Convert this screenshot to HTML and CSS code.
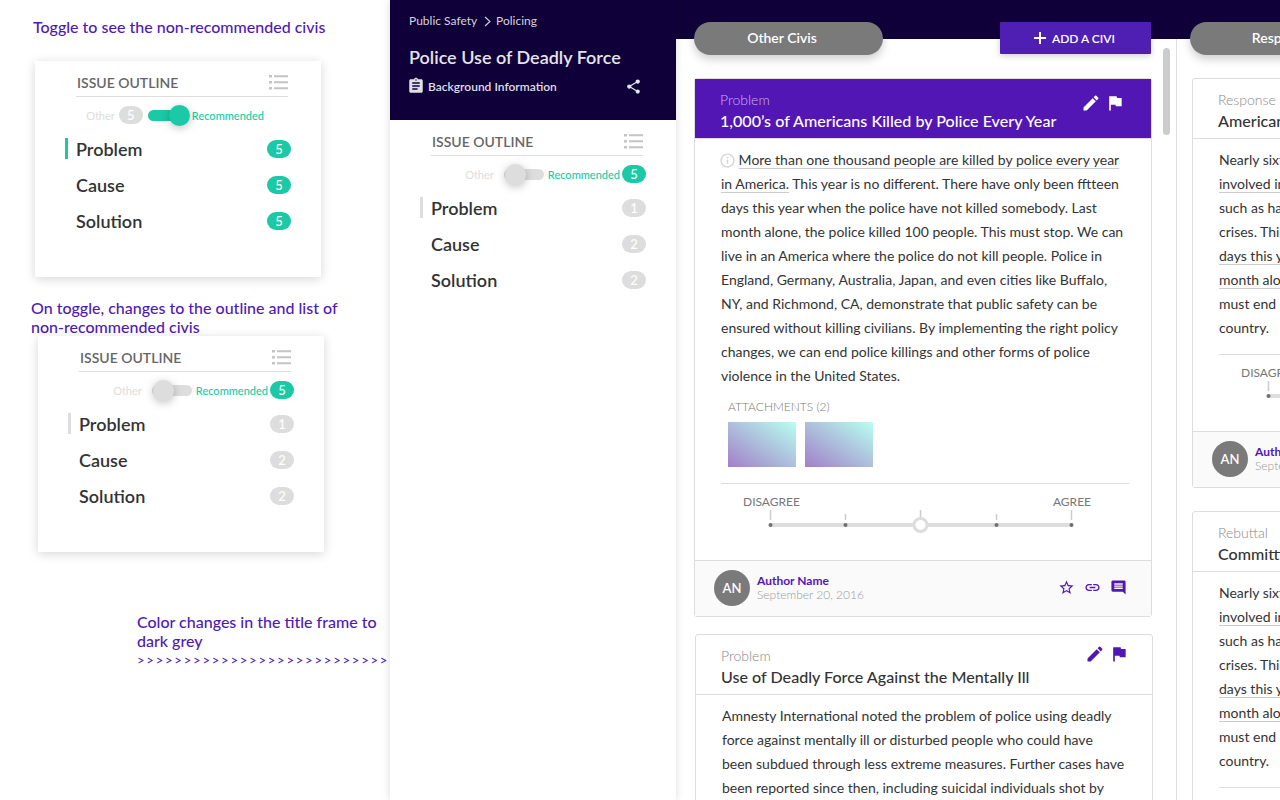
FILE: index.html
```html
<!DOCTYPE html>
<html lang="en">
<head>
    <meta charset="UTF-8">
    <meta name="viewport" content="width=device-width, initial-scale=1.0">
    <title>Police Use of Deadly Force</title>
    <link rel="stylesheet" href="styles.css">
</head>
<body>

    <svg class="sprite" xmlns="http://www.w3.org/2000/svg">
        <symbol id="i-edit" viewBox="0 0 24 24"><path d="M3 17.25V21h3.75L17.81 9.94l-3.75-3.75L3 17.25zM20.71 7.04c.39-.39.39-1.02 0-1.41l-2.34-2.34c-.39-.39-1.02-.39-1.41 0l-1.83 1.83 3.75 3.75 1.83-1.83z"/></symbol>
        <symbol id="i-flag" viewBox="0 0 24 24"><path d="M14.4 6L14 4H5v17h2v-7h5.6l.4 2h7V6z"/></symbol>
        <symbol id="i-star" viewBox="0 0 24 24"><path d="M22 9.24l-7.19-.62L12 2 9.19 8.63 2 9.24l5.46 4.73L5.82 21 12 17.27 18.18 21l-1.63-7.03L22 9.24zM12 15.4l-3.76 2.27 1-4.28-3.32-2.88 4.38-.38L12 6.1l1.71 4.04 4.38.38-3.32 2.88 1 4.28L12 15.4z"/></symbol>
        <symbol id="i-link" viewBox="0 0 24 24"><path d="M3.9 12c0-1.71 1.39-3.1 3.1-3.1h4V7H7c-2.76 0-5 2.24-5 5s2.24 5 5 5h4v-1.9H7c-1.71 0-3.1-1.39-3.1-3.1zM8 13h8v-2H8v2zm9-6h-4v1.9h4c1.71 0 3.1 1.39 3.1 3.1s-1.39 3.1-3.1 3.1h-4V17h4c2.76 0 5-2.24 5-5s-2.24-5-5-5z"/></symbol>
        <symbol id="i-comment" viewBox="0 0 24 24"><path d="M21.99 4c0-1.1-.89-2-1.99-2H4c-1.1 0-2 .9-2 2v12c0 1.1.9 2 2 2h14l4 4-.01-18zM18 14H6v-2h12v2zm0-3H6V9h12v2zm0-3H6V6h12v2z"/></symbol>
        <symbol id="i-clipboard" viewBox="0 0 24 24"><path d="M19 3h-4.18C14.4 1.84 13.3 1 12 1c-1.3 0-2.4.84-2.82 2H5c-1.1 0-2 .9-2 2v14c0 1.1.9 2 2 2h14c1.1 0 2-.9 2-2V5c0-1.1-.9-2-2-2zm-7 0c.55 0 1 .45 1 1s-.45 1-1 1-1-.45-1-1 .45-1 1-1zm2 14H7v-2h7v2zm3-4H7v-2h10v2zm0-4H7V7h10v2z"/></symbol>
        <symbol id="i-share" viewBox="0 0 24 24"><path d="M18 16.08c-.76 0-1.44.3-1.96.77L8.91 12.7c.05-.23.09-.46.09-.7s-.04-.47-.09-.7l7.05-4.11c.54.5 1.25.81 2.04.81 1.66 0 3-1.34 3-3s-1.34-3-3-3-3 1.34-3 3c0 .24.04.47.09.7L8.04 9.81C7.5 9.31 6.79 9 6 9c-1.66 0-3 1.34-3 3s1.34 3 3 3c.79 0 1.5-.31 2.04-.81l7.12 4.16c-.05.21-.08.43-.08.65 0 1.61 1.31 2.92 2.92 2.92 1.61 0 2.92-1.31 2.92-2.92s-1.31-2.92-2.92-2.92z"/></symbol>
        <symbol id="i-info" viewBox="0 0 24 24"><path d="M11 7h2v2h-2zm0 4h2v6h-2zm1-9C6.48 2 2 6.48 2 12s4.48 10 10 10 10-4.48 10-10S17.52 2 12 2zm0 18c-4.41 0-8-3.59-8-8s3.59-8 8-8 8 3.59 8 8-3.59 8-8 8z"/></symbol>
        <symbol id="i-list" viewBox="0 0 19 15"><path d="M0 0h3v2.4H0zM5 .2h14v2H5zM0 6h3v2.4H0zM5 6.2h14v2H5zM0 12h3v2.4H0zM5 12.2h14v2H5z"/></symbol>
        <symbol id="i-plus" viewBox="0 0 12 12"><path d="M5 0h2v5h5v2H7v5H5V7H0V5h5z"/></symbol>
        <symbol id="i-chevron" viewBox="0 0 7 11"><path d="M1 1l5 4.5L1 10" fill="none" stroke="currentColor" stroke-width="1.1"/></symbol>
    </svg>

    <div class="board">

        <section class="notes">
            <p class="note note-first">Toggle to see the non-recommended civis</p>

            <div class="outline outline-first">
                <div class="outline-head">
                    <span>ISSUE OUTLINE</span>
                    <svg class="icon-list"><use href="#i-list"/></svg>
                </div>
                <div class="toggle-row toggle-row-on">
                    <span class="toggle-other">Other</span>
                    <span class="badge badge-grey">5</span>
                    <span class="toggle toggle-on"></span>
                    <span class="toggle-rec">Recommended</span>
                </div>
                <ul class="outline-list">
                    <li class="current-green">Problem <span class="badge">5</span></li>
                    <li>Cause <span class="badge">5</span></li>
                    <li>Solution <span class="badge">5</span></li>
                </ul>
            </div>

            <p class="note note-second">On toggle, changes to the outline and list of non-recommended civis</p>

            <div class="outline outline-second">
                <div class="outline-head">
                    <span>ISSUE OUTLINE</span>
                    <svg class="icon-list"><use href="#i-list"/></svg>
                </div>
                <div class="toggle-row">
                    <span class="toggle-other">Other</span>
                    <span class="toggle"></span>
                    <span class="toggle-rec">Recommended</span>
                    <span class="badge">5</span>
                </div>
                <ul class="outline-list">
                    <li class="current-grey">Problem <span class="badge badge-grey">1</span></li>
                    <li>Cause <span class="badge badge-grey">2</span></li>
                    <li>Solution <span class="badge badge-grey">2</span></li>
                </ul>
            </div>

            <p class="note note-third">Color changes in the title frame to dark grey</p>
            <p class="note-arrows">&gt;&gt;&gt;&gt;&gt;&gt;&gt;&gt;&gt;&gt;&gt;&gt;&gt;&gt;&gt;&gt;&gt;&gt;&gt;&gt;&gt;&gt;&gt;&gt;&gt;&gt;&gt;</p>
        </section>

        <section class="issue">
            <header class="issue-head">
                <div class="crumbs">Public Safety <svg class="icon-chevron"><use href="#i-chevron"/></svg> Policing</div>
                <h1>Police Use of Deadly Force</h1>
                <div class="issue-links">
                    <svg class="icon-clipboard"><use href="#i-clipboard"/></svg>
                    <span>Background Information</span>
                    <svg class="icon-share"><use href="#i-share"/></svg>
                </div>
            </header>
            <div class="outline">
                <div class="outline-head">
                    <span>ISSUE OUTLINE</span>
                    <svg class="icon-list"><use href="#i-list"/></svg>
                </div>
                <div class="toggle-row">
                    <span class="toggle-other">Other</span>
                    <span class="toggle"></span>
                    <span class="toggle-rec">Recommended</span>
                    <span class="badge">5</span>
                </div>
                <ul class="outline-list">
                    <li class="current-grey">Problem <span class="badge badge-grey">1</span></li>
                    <li>Cause <span class="badge badge-grey">2</span></li>
                    <li>Solution <span class="badge badge-grey">2</span></li>
                </ul>
            </div>
        </section>

        <section class="column column-civis">
            <div class="column-top">
                <span class="pill">Other Civis</span>
                <span class="add-btn"><svg class="icon-plus"><use href="#i-plus"/></svg>ADD A CIVI</span>
            </div>
            <div class="scrollbar"></div>
            <div class="column-body">

                <article class="civi civi-active">
                    <div class="civi-head">
                        <div>
                            <div class="civi-type">Problem</div>
                            <h2>1,000’s of Americans Killed by Police Every Year</h2>
                        </div>
                        <div class="civi-tools">
                            <svg><use href="#i-edit"/></svg>
                            <svg><use href="#i-flag"/></svg>
                        </div>
                    </div>
                    <p class="civi-text"><svg class="icon-info"><use href="#i-info"/></svg> <span class="marked">More than one thousand people are killed by police every year in America.</span> This year is no different. There have only been fftteen days this year when the police have not killed somebody. Last month alone, the police killed 100 people. This must stop. We can live in an America where the police do not kill people. Police in England, Germany, Australia, Japan, and even cities like Buffalo, NY, and Richmond, CA, demonstrate that public safety can be ensured without killing civilians. By implementing the right policy changes, we can end police killings and other forms of police violence in the United States.</p>
                    <div class="attachments">
                        <div class="attachments-label">ATTACHMENTS (2)</div>
                        <div class="thumbs">
                            <div class="thumb"></div>
                            <div class="thumb"></div>
                        </div>
                    </div>
                    <div class="scale">
                        <div class="scale-labels"><span>DISAGREE</span><span>AGREE</span></div>
                        <svg class="scale-track" width="318" height="26" viewBox="0 0 318 26">
                            <rect x="8" y="13" width="301" height="4" fill="#ddd"/>
                            <rect x="7.75" y="0" width="1.5" height="10" fill="#ccc"/>
                            <rect x="82.75" y="4" width="1.5" height="6" fill="#ccc"/>
                            <rect x="157.75" y="0" width="1.5" height="8" fill="#ccc"/>
                            <rect x="233.75" y="4" width="1.5" height="6" fill="#ccc"/>
                            <rect x="308.75" y="0" width="1.5" height="10" fill="#ccc"/>
                            <circle cx="8.5" cy="15" r="2" fill="#707070"/>
                            <circle cx="83.5" cy="15" r="2" fill="#707070"/>
                            <circle cx="234.5" cy="15" r="2" fill="#707070"/>
                            <circle cx="309.5" cy="15" r="2" fill="#707070"/>
                            <circle cx="158.5" cy="15" r="6.5" fill="#fff" stroke="#ddd" stroke-width="3"/>
                        </svg>
                    </div>
                    <footer class="civi-foot">
                        <span class="avatar">AN</span>
                        <div class="author">
                            <div class="author-name">Author Name</div>
                            <div class="author-date">September 20, 2016</div>
                        </div>
                        <div class="foot-tools">
                            <svg><use href="#i-star"/></svg>
                            <svg><use href="#i-link"/></svg>
                            <svg><use href="#i-comment"/></svg>
                        </div>
                    </footer>
                </article>

                <article class="civi civi-offset">
                    <div class="civi-head">
                        <div>
                            <div class="civi-type">Problem</div>
                            <h2>Use of Deadly Force Against the Mentally Ill</h2>
                        </div>
                        <div class="civi-tools">
                            <svg><use href="#i-edit"/></svg>
                            <svg><use href="#i-flag"/></svg>
                        </div>
                    </div>
                    <p class="civi-text">Amnesty International noted the problem of police using deadly force against mentally ill or disturbed people who could have been subdued through less extreme measures. Further cases have been reported since then, including suicidal individuals shot by officers called to help them.</p>
                </article>

            </div>
        </section>

        <section class="column column-responses">
            <div class="column-top">
                <span class="pill">Responses</span>
            </div>
            <div class="column-body">

                <article class="civi">
                    <div class="civi-head">
                        <div>
                            <div class="civi-type">Response</div>
                            <h2>American Police Need Better Training</h2>
                        </div>
                    </div>
                    <p class="civi-text">Nearly sixty percent of those killed were<br>
                        <span class="marked">involved in incidents of mental illness</span><br>
                        such as having severe psychiatric<br>
                        crises. This has happened on most<br>
                        <span class="marked">days this year, all across the nation.</span><br>
                        <span class="marked">month alone, officers killed many more.</span><br>
                        must end police violence in this<br>
                        country.</p>
                    <div class="scale">
                        <div class="scale-labels"><span>DISAGREE</span><span>AGREE</span></div>
                        <svg class="scale-track" width="318" height="26" viewBox="0 0 318 26">
                            <rect x="8" y="13" width="301" height="4" fill="#ddd"/>
                            <rect x="7.75" y="0" width="1.5" height="10" fill="#ccc"/>
                            <circle cx="8.5" cy="15" r="2" fill="#707070"/>
                        </svg>
                    </div>
                    <footer class="civi-foot">
                        <span class="avatar">AN</span>
                        <div class="author">
                            <div class="author-name">Author Name</div>
                            <div class="author-date">September 20, 2016</div>
                        </div>
                    </footer>
                </article>

                <article class="civi">
                    <div class="civi-head">
                        <div>
                            <div class="civi-type">Rebuttal</div>
                            <h2>Committing to Better Police Training</h2>
                        </div>
                    </div>
                    <p class="civi-text">Nearly sixty percent of those killed were<br>
                        <span class="marked">involved in incidents of mental illness</span><br>
                        such as having severe psychiatric<br>
                        crises. This has happened on most<br>
                        <span class="marked">days this year, all across the nation.</span><br>
                        <span class="marked">month alone, officers killed many more.</span><br>
                        must end police violence in this<br>
                        country.</p>
                    <div class="scale"></div>
                </article>

            </div>
        </section>

    </div>

</body>
</html>
```

FILE: styles.css
```css
* {
    box-sizing: border-box;
}

html, body {
    margin: 0;
    height: 100%;
    overflow: hidden;
}

body {
    font-family: Lato, "Open Sans", sans-serif;
    color: #333;
    background-color: #fff;
}

.sprite {
    display: none;
}

.board {
    display: flex;
    width: 1280px;
    height: 800px;
    overflow: hidden;
}

/* annotations on the left */

.notes {
    flex: 0 0 390px;
}

.note {
    margin: 0;
    font-size: 16px;
    font-weight: 500;
    line-height: 19px;
    color: #4f1ab4;
}

.note-first {
    margin: 17px 0 25px 33px;
}

.note-second {
    margin: 21px 40px 0 31px;
}

.note-third {
    margin: 60px 10px 0 137px;
}

.note-arrows {
    margin: 1px 0 0 137px;
    font-size: 13px;
    font-weight: 500;
    line-height: 19px;
    letter-spacing: 1.8px;
    color: #4f1ab4;
    white-space: nowrap;
}

/* issue outline widget */

.outline {
    position: relative;
    width: 286px;
    height: 216px;
    padding: 0 30px 0 41px;
    background-color: #fff;
}

.outline-first,
.outline-second {
    box-shadow: 0 2px 10px rgba(0, 0, 0, 0.16);
}

.outline-first {
    margin-left: 35px;
}

.outline-second {
    margin-left: 38px;
}

.outline-head {
    display: flex;
    justify-content: space-between;
    align-items: center;
    width: 212px;
    height: 36px;
    padding: 8px 0 0 1px;
    border-bottom: 1px solid #ddd;
    font-size: 14px;
    font-weight: 600;
    color: #666;
}

.icon-list {
    width: 19px;
    height: 15px;
    fill: #c4c4c4;
}

.toggle-row {
    display: flex;
    justify-content: flex-end;
    align-items: center;
    width: 215px;
    height: 18px;
    margin-top: 9px;
    font-size: 11px;
}

.toggle-row-on {
    padding-right: 25px;
}

.toggle-other {
    color: #ddd;
    margin-right: 4px;
}

.toggle-rec {
    color: #1bc9a6;
    font-weight: 500;
    margin-right: 2px;
}

.toggle {
    position: relative;
    width: 40px;
    height: 11px;
    margin: 0 4px 0 6px;
    border-radius: 6px;
    background-color: #ddd;
}

.toggle::after {
    content: "";
    position: absolute;
    top: -5px;
    left: 1px;
    width: 21px;
    height: 21px;
    border-radius: 50%;
    background-color: #ddd;
    box-shadow: 0 2px 8px rgba(0, 0, 0, 0.25);
}

.toggle-on {
    margin: 0 4px 0 5px;
    background-color: #1bc9a6;
}

.toggle-on::after {
    left: 21px;
    background-color: #1bc9a6;
}

.badge {
    display: inline-block;
    width: 24px;
    height: 18px;
    border-radius: 9px;
    background-color: #1bc9a6;
    color: #fff;
    font-size: 13px;
    font-weight: 500;
    line-height: 18px;
    text-align: center;
}

.badge-grey {
    background-color: #ddd;
}

.outline-list {
    width: 215px;
    margin: 7px 0 0;
    padding: 0;
    list-style: none;
    font-size: 18px;
    font-weight: 600;
    color: #333;
}

.outline-list li {
    position: relative;
    display: flex;
    justify-content: space-between;
    align-items: center;
    height: 36px;
}

.current-green::before,
.current-grey::before {
    content: "";
    position: absolute;
    left: -11px;
    top: 7px;
    width: 3px;
    height: 21px;
    background-color: #1bc9a6;
}

.current-grey::before {
    background-color: #ddd;
}

/* issue panel */

.issue {
    position: relative;
    z-index: 2;
    flex: 0 0 286px;
    height: 800px;
    background-color: #fff;
    box-shadow: 0 0 8px rgba(0, 0, 0, 0.14);
}

.issue-head {
    height: 120px;
    padding: 13px 19px 0;
    background-color: #100039;
    color: #ddd;
}

.crumbs {
    display: flex;
    align-items: center;
    font-size: 12px;
    line-height: 15px;
    white-space: pre;
    color: #d5d2dd;
}

.icon-chevron {
    width: 7px;
    height: 11px;
    margin: 1px 2px 0 4px;
}

.issue-head h1 {
    margin: 18px 0 0;
    font-size: 18px;
    font-weight: 600;
    line-height: 23px;
    color: #e6e4ea;
}

.issue-links {
    display: flex;
    align-items: center;
    height: 16px;
    margin-top: 9px;
    font-size: 12px;
    font-weight: 600;
    color: #e0dee6;
}

.icon-clipboard {
    width: 18px;
    height: 18px;
    margin: 0 3px 0 -2px;
    fill: #e0dee6;
}

.icon-share {
    width: 17px;
    height: 17px;
    margin-left: auto;
    margin-right: 15px;
    fill: #e6e4ea;
}

/* thread columns */

.column {
    position: relative;
    height: 800px;
}

.column-civis {
    flex: 0 0 501px;
}

.column-responses {
    flex: 0 0 480px;
}

.column-top {
    position: relative;
    z-index: 1;
    display: flex;
    justify-content: space-between;
    height: 39px;
    padding: 22px 26px 0 18px;
    background-color: #100039;
}

.column-responses .column-top {
    padding-left: 13px;
}

.column-body {
    height: 761px;
    padding: 39px 0 0 18px;
}

.column-civis .column-body {
    border-right: 1px solid #ddd;
}

.column-responses .column-body {
    padding-left: 15px;
}

.pill {
    flex: none;
    width: 189px;
    height: 33px;
    border-radius: 17px;
    background-color: #7a7a7a;
    color: #fff;
    font-size: 14px;
    font-weight: 600;
    line-height: 32px;
    text-align: center;
    box-shadow: 0 4px 10px rgba(0, 0, 0, 0.2);
}

.column-civis .pill {
    padding-right: 13px;
}

.add-btn {
    display: flex;
    justify-content: center;
    align-items: center;
    width: 151px;
    height: 32px;
    padding-right: 2px;
    border-radius: 1px;
    background-color: #4f1eb2;
    color: #fff;
    font-size: 12px;
    font-weight: 600;
    box-shadow: 0 2px 6px rgba(0, 0, 0, 0.18);
}

.icon-plus {
    width: 12px;
    height: 12px;
    margin-right: 6px;
    fill: #fff;
}

.scrollbar {
    position: absolute;
    top: 48px;
    right: 7px;
    width: 7px;
    height: 87px;
    border-radius: 4px;
    background-color: #ccc;
}

/* civi cards */

.civi {
    width: 458px;
    margin-bottom: 17px;
    border: 1px solid #ddd;
    border-radius: 3px;
    background-color: #fff;
}

.civi-offset {
    margin-left: 1px;
}

.column-responses .civi {
    margin-bottom: 23px;
}

.civi-head {
    display: flex;
    justify-content: space-between;
    height: 60px;
    padding: 12px 26px 0 25px;
    border-bottom: 1px solid #ddd;
}

.civi-type {
    font-size: 14px;
    font-weight: 300;
    line-height: 17px;
    color: #888;
}

.civi-head h2 {
    margin: 3px 0 0;
    font-size: 16.1px;
    font-weight: 500;
    line-height: 20px;
    color: #333;
}

.civi-active .civi-head {
    background-color: #5216b4;
}

.civi-active .civi-type {
    color: #c9b4ec;
}

.civi-active .civi-head h2 {
    color: #fff;
}

.civi-tools {
    display: flex;
    gap: 4px;
    margin-top: 2px;
}

.civi-offset .civi-tools {
    margin: -3px -3px 0 0;
}

.civi-tools svg {
    width: 20px;
    height: 20px;
    fill: #5216b4;
}

.civi-active .civi-tools svg {
    fill: #fff;
}

.civi-text {
    margin: 0;
    padding: 9px 26px 0 26px;
    font-size: 14px;
    line-height: 24px;
    color: #333;
}

.marked {
    text-decoration: underline 1px #ccc;
    text-underline-offset: 3px;
}

.icon-info {
    width: 17px;
    height: 17px;
    margin: 0 -1px 0 -2px;
    vertical-align: -4px;
    fill: #d4d4d4;
}

.attachments {
    padding: 11px 0 0 33px;
}

.attachments-label {
    font-size: 12px;
    font-weight: 300;
    line-height: 15px;
    color: #777;
}

.thumbs {
    display: flex;
    gap: 9px;
    margin-top: 8px;
}

.thumb {
    width: 68px;
    height: 45px;
    background: linear-gradient(to top right, #a27fc9, #b8fff0);
}

.scale {
    height: 77px;
    margin: 16px 22px 0 26px;
    padding-top: 10px;
    border-top: 1px solid #ddd;
}

.column-responses .scale {
    margin-top: 14px;
}

.scale-labels {
    display: flex;
    justify-content: space-between;
    padding: 0 38px 0 22px;
    font-size: 12px;
    line-height: 15px;
    color: #777;
}

.scale-track {
    display: block;
    margin: 1px 0 0 41px;
}

.civi-foot {
    display: flex;
    align-items: center;
    height: 56px;
    padding: 0 24px 2px 19px;
    border-top: 1px solid #ddd;
    background-color: #fafafa;
}

.avatar {
    flex: none;
    width: 36px;
    height: 36px;
    border-radius: 50%;
    background-color: #7a7a7a;
    color: #fff;
    font-size: 13px;
    font-weight: 600;
    line-height: 36px;
    text-align: center;
}

.author {
    margin-left: 7px;
    font-size: 12px;
    line-height: 14px;
}

.author-name {
    font-weight: 700;
    color: #5216b4;
}

.author-date {
    font-weight: 300;
    color: #999;
}

.foot-tools {
    display: flex;
    gap: 9px;
    margin-left: auto;
}

.foot-tools svg {
    width: 17px;
    height: 17px;
    fill: #5216b4;
}
```
